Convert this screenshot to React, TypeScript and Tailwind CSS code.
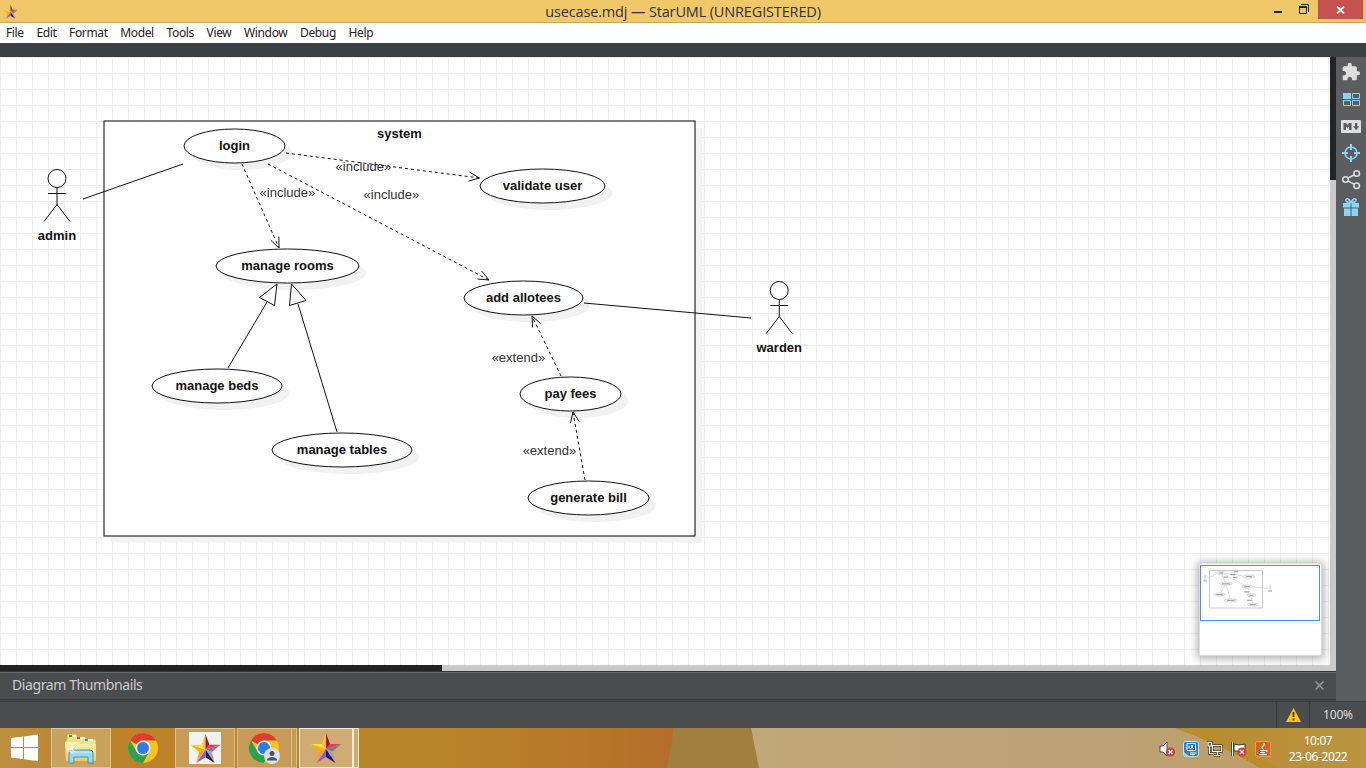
import React from "react";
import { MdExtension } from "react-icons/md";

const ink = "#111111";

type Oval = { x: number; y: number; w: number; label: string };

const ovals: Oval[] = [
  { x: 184, y: 72, w: 101, label: "login" },
  { x: 480, y: 112, w: 125, label: "validate user" },
  { x: 216, y: 192, w: 143, label: "manage rooms" },
  { x: 464, y: 224, w: 119, label: "add allotees" },
  { x: 152, y: 312, w: 130, label: "manage beds" },
  { x: 272, y: 376, w: 140, label: "manage tables" },
  { x: 520, y: 320, w: 101, label: "pay fees" },
  { x: 528, y: 424, w: 121, label: "generate bill" },
];

function UseCase({ x, y, w, label }: Oval) {
  const cx = x + w / 2;
  return (
    <g>
      <ellipse cx={cx + 7} cy={y + 24} rx={w / 2} ry={17} fill="#f1f1f1" />
      <ellipse cx={cx} cy={y + 17} rx={w / 2} ry={17} fill="#fff" stroke={ink} />
      <text x={cx} y={y + 21} textAnchor="middle" fontWeight="bold" fill={ink}>{label}</text>
    </g>
  );
}

function Actor({ x, y, label }: { x: number; y: number; label: string }) {
  return (
    <g fill="none" stroke={ink}>
      <circle cx={x} cy={y} r={9} fill="#fff" />
      <path d={`M${x} ${y + 9}v17.5M${x - 9} ${y + 15}h18M${x} ${y + 26}l-13 17M${x} ${y + 26}l13 17`} />
      <text x={x} y={y + 61} textAnchor="middle" fontWeight="bold" fill={ink} stroke="none">{label}</text>
    </g>
  );
}

function Dependency({ x1, y1, x2, y2 }: { x1: number; y1: number; x2: number; y2: number }) {
  const a = Math.atan2(y1 - y2, x1 - x2);
  const p = (d: number) => `${x2 + 11.5 * Math.cos(a + d)} ${y2 + 11.5 * Math.sin(a + d)}`;
  return (
    <g fill="none" stroke={ink}>
      <path d={`M${x1} ${y1}L${x2} ${y2}`} strokeDasharray="3 3" />
      <path d={`M${p(0.4)}L${x2} ${y2}L${p(-0.4)}`} />
    </g>
  );
}

function Diagram() {
  return (
    <svg width="1330" height="608" className="block" fontFamily="'Liberation Sans', Arial, sans-serif" fontSize="13">
      <defs>
        <pattern id="grid" width="16" height="16" patternUnits="userSpaceOnUse">
          <path d="M0 .5H16M.5 0V16" stroke="#eeeeee" />
        </pattern>
      </defs>
      <rect width="1330" height="608" fill="#fff" />
      <rect width="1330" height="608" fill="url(#grid)" />
      <rect x="111" y="71" width="591" height="415" fill="#f1f1f1" fillOpacity=".85" />
      <rect x="104" y="64" width="591" height="415" fill="#fff" stroke="#000" />
      <text x="399.5" y="81" textAnchor="middle" fontWeight="bold" fill={ink}>system</text>
      {ovals.map((o) => <UseCase key={o.label} {...o} />)}
      <Actor x={57} y={121.5} label="admin" />
      <Actor x={779.25} y={233.5} label="warden" />
      <path d="M83 142L183 107M584 246L751 261" stroke={ink} fill="none" />
      <Dependency x1={286} y1={96} x2={479.500} y2={121} />
      <Dependency x1={242} y1={107} x2={279} y2={191} />
      <Dependency x1={268} y1={107} x2={489} y2={223} />
      <Dependency x1={561} y1={319} x2={532} y2={259} />
      <Dependency x1={585} y1={423} x2={573} y2={355} />
      <g stroke={ink} fill="#fff">
        <path d="M228 311L267 245M337 375L298 247" />
        <path d="M277 227L259.5 240.5L274.5 248.5Z" />
        <path d="M291.5 227L289.5 248.5L306 243.5Z" />
      </g>
      <g fill="#333" textAnchor="middle">
        <text x="363.4" y="114">«include»</text>
        <text x="287.4" y="140">«include»</text>
        <text x="391.4" y="142">«include»</text>
        <text x="518.4" y="305">«extend»</text>
        <text x="549.4" y="398">«extend»</text>
      </g>
    </svg>
  );
}

function StarLogo({ size }: { size: number }) {
  return (
    <svg width={size} height={size} viewBox="0 0 32 32">
      <path d="M16 17V1L12 12Z" fill="#ffc91a" />
      <path d="M16 17V1L20 12Z" fill="#a8123c" />
      <path d="M16 17L20 12L31.5 12Z" fill="#ef3560" />
      <path d="M16 17L31.5 12L22.5 19.5Z" fill="#808080" />
      <path d="M16 17L22.5 19.5L25.5 31Z" fill="#a5a5a5" />
      <path d="M16 17L25.5 31L16 25Z" fill="#270a6b" />
      <path d="M16 17V25L6.5 31Z" fill="#8d57ec" />
      <path d="M16 17L6.5 31L9.5 19.5Z" fill="#f2a50c" />
      <path d="M16 17L9.5 19.5L.5 12Z" fill="#f7b100" />
      <path d="M16 17L.5 12L12 12Z" fill="#ffe040" />
    </svg>
  );
}

function Chrome({ user = false }: { user?: boolean }) {
  return (
    <svg width="32" height="32" viewBox="0 0 32 32">
      <circle cx="16" cy="16" r="15" fill="#fcc31e" />
      <path d="M16 16L3 8.5A15 15 0 0 1 29 8.5H16Z" fill="#e33b2e" />
      <path d="M3 8.5A15 15 0 0 0 16 31L22.5 19.5L9.5 19.5Z" fill="#2ba24c" />
      <circle cx="16" cy="16" r="7.5" fill="#fff" />
      <circle cx="16" cy="16" r="6" fill="#2d7be9" />
      {user && (
        <g>
          <circle cx="24" cy="24" r="8" fill="#dde1e7" />
          <circle cx="24" cy="21.5" r="2.5" fill="#4a5568" />
          <path d="M19 28.5V27Q24 23 29 27V28.5Z" fill="#4a5568" />
        </g>
      )}
    </svg>
  );
}

function Explorer() {
  return (
    <svg width="34" height="32" viewBox="0 0 34 32">
      <defs>
        <linearGradient id="folder" x2="0" y2="1"><stop stopColor="#fff3b3" /><stop offset="1" stopColor="#e6cc6a" /></linearGradient>
      </defs>
      <path d="M3 8V3Q3 2 4 2H12L14 5H21L23 7H31L32 9V28H2V8Z" fill="#f4df83" stroke="#c6a447" strokeWidth=".7" />
      <path d="M5 3H12V5H5Z" fill="#fff" /><path d="M5 3h3v2h-3Z" fill="#12b33c" />
      <path d="M13 5H21V7H13Z" fill="#fff" /><path d="M13 5h3v2h-3Z" fill="#d84b2d" />
      <path d="M21 7H29V9H21Z" fill="#fff" /><path d="M21 7h3v2h-3Z" fill="#2498e5" />
      <path d="M1 10H14L16 12H32V29H2Z" fill="url(#folder)" />
      <path d="M5 31V21Q5 18 8 18H26Q29 18 29 21V31H24V25H10V31Z" fill="#9ad8ef" stroke="#3e91b5" />
      <path d="M6 20H28" stroke="#d3f0fa" />
      <path d="M8 12V22M3 17H13M5 14L11 20M11 14L5 20" stroke="#fff" strokeWidth=".7" />
    </svg>
  );
}

function ToolRail() {
  return (
    <aside className="flex w-[30px] flex-col items-center gap-[5px] bg-[#5c5d5f] pt-1">
      <div className="flex h-[22px] w-5 items-center justify-center text-[#dedede]"><MdExtension size={20} /></div>
      <svg width="20" height="22" viewBox="0 0 20 22" fill="none" stroke="#8bd3f7">
        <path d="M2 5H10V11H2Z" fill="#8bd3f7" stroke="none" />
        <path d="M11.5 5.5H18.5V10.5H11.5ZM2.5 12.5H9.5V17.5H2.5ZM11.5 12.5H18.5V17.5H11.5Z" />
      </svg>
      <svg width="20" height="22" viewBox="0 0 20 22">
        <rect y="5" width="20" height="13" rx="1" fill="#dedede" />
        <path d="M2.500 15V8H5L6.500 10L8 8H10.500V15H8V11.500L6.500 13L5 11.500V15ZM14 8H16.200V11.200H18.300L15.100 15.200L12 11.200H14Z" fill="#5c5d5f" />
      </svg>
      <svg width="20" height="22" viewBox="0 0 20 22" fill="none" stroke="#8bd3f7">
        <circle cx="10" cy="11" r="6" strokeWidth="1.6" /><path d="M10 2V8M10 14V20M1 11H7M13 11H19" strokeWidth="2" />
      </svg>
      <svg width="20" height="22" viewBox="0 0 20 22" fill="none" stroke="#dedede" strokeWidth="1.5">
        <circle cx="4.5" cy="10.5" r="2.8" /><circle cx="15.7" cy="4.5" r="2.8" /><circle cx="15.7" cy="16.7" r="2.8" /><path d="M7 9L13 6M7 12L13 15.2" />
      </svg>
      <svg width="20" height="22" viewBox="0 0 20 22">
        <path d="M2 7H9.5V11.5H2ZM10.5 7H18V11.5H10.5ZM3 12.5H9.5V20H3ZM10.5 12.5H17V20H10.5Z" fill="#8bd3f7" />
        <path d="M10 6.5Q4 6.5 5 3.5Q7 1 10 6.5Q13 1 15 3.5Q16 6.5 10 6.5" fill="none" stroke="#8bd3f7" strokeWidth="1.5" />
      </svg>
    </aside>
  );
}

function Thumbnail() {
  return (
    <div className="absolute left-[1199px] top-[506px] h-[93px] w-[123px] border border-[#ddd] bg-white shadow-[0_1px_8px_2px_rgba(0,0,0,0.3)]">
      <svg width="121" height="91">
        <rect x=".5" y="1.5" width="119" height="55" fill="#fff" stroke="#4c8cf5" />
        <rect x="9.5" y="6.5" width="53" height="37.5" fill="#fff" stroke="#ccc" />
        <g transform="translate(0 .9) scale(.09)">
          <path d="M83 142L183 107M242 107L279 191M268 107L489 223M286 96L479 121M228 311L277 227M337 375L292 227M561 319L532 259M585 423L573 355M584 246L751 261" fill="none" stroke="#ccc" strokeWidth="7" />
          {ovals.map((o) => (
            <g key={o.label}>
              <ellipse cx={o.x + o.w / 2} cy={o.y + 17} rx={o.w / 2} ry="17" fill="#f4f4f4" stroke="#bbb" strokeWidth="6" />
              <path d={`M${o.x + 28} ${o.y + 18}h${o.w - 56}`} stroke="#777" strokeWidth="8" />
            </g>
          ))}
          <path d="M377 76H423M337 109H389M261 135H313M365 137H417M493 300H543M524 393H574M40 178H74M758 290H800" stroke="#666" strokeWidth="8" />
          <circle cx="57" cy="121" r="9" fill="none" stroke="#ccc" strokeWidth="7" />
          <circle cx="779" cy="233" r="9" fill="none" stroke="#ccc" strokeWidth="7" />
          <path d="M57 130V150L44 164M57 150L70 164M779 242V262L766 276M779 262L792 276" fill="none" stroke="#bbb" strokeWidth="7" />
        </g>
      </svg>
    </div>
  );
}

function Taskbar() {
  return (
    <footer className="relative flex h-10 bg-[#b87b25]">
      <svg className="absolute inset-0" width="1366" height="40" preserveAspectRatio="none">
        <defs>
          <linearGradient id="wood" gradientUnits="userSpaceOnUse" x1="0" x2="680" y1="0" y2="0">
            <stop stopColor="#bd9040" /><stop offset=".08" stopColor="#b98834" /><stop offset=".18" stopColor="#bb8229" />
            <stop offset=".65" stopColor="#b98429" /><stop offset=".85" stopColor="#b67829" /><stop offset="1" stopColor="#b56c29" />
          </linearGradient>
          <linearGradient id="sand"><stop stopColor="#c1a878" /><stop offset=".7" stopColor="#bca276" /><stop offset="1" stopColor="#bd9e64" /></linearGradient>
          <linearGradient id="gold"><stop stopColor="#b78b2d" /><stop offset="1" stopColor="#ba9440" /></linearGradient>
        </defs>
        <path d="M0 0H680V40H0Z" fill="url(#wood)" />
        <path d="M674 0H755L762 40H667Z" fill="#a17f3c" />
        <path d="M751 0H1190L1270 40H759Z" fill="url(#sand)" />
        <path d="M1175 0H1366V40H1260Q1225 18 1175 0Z" fill="url(#gold)" />
        <path d="M1175 0H1193Q1238 17 1280 40H1260Q1225 18 1175 0Z" fill="#b98c2c" />
      </svg>
      <div className="relative flex w-full">
        <button className="grid w-[51px] place-items-center pr-px">
          <svg width="28" height="28" viewBox="0 0 28 28" fill="#fff"><path d="M0 4L12 2.5V13H0ZM13 2.4L27 .5V13H13ZM0 14H12V25L0 23.5ZM13 14H27V27L13 25.2Z" /></svg>
        </button>
        <button className="grid h-10 w-[60px] place-items-center border border-[#dcc595] bg-[#c9a25e]"><Explorer /></button>
        <button className="grid w-16 place-items-center"><Chrome /></button>
        <button className="grid h-10 w-[60px] place-items-center border border-[#dcc08c] bg-[#c79b55]">
          <span className="grid size-8 place-items-center bg-[#f2f2f2] shadow-[inset_0_0_3px_#fff]"><StarLogo size={31} /></span>
        </button>
        <button className="ml-[2px] flex h-10 w-[60px] border border-[#dcc08c] bg-[#c79b55]">
          <span className="flex h-full w-[54px] items-center justify-center border-r border-[#dcc08c] pr-px"><Chrome user /></span>
        </button>
        <button className="ml-[2px] flex h-10 w-[60px] border border-[#f9eedc] bg-[#d0ab72]">
          <span className="flex h-full w-[54px] items-center justify-center border-r-2 border-[#f9eedc]"><StarLogo size={32} /></span>
        </button>
        <div className="ml-auto mr-[18px] flex items-center">
          <div className="mr-[17px] flex gap-2 pt-[2px]">
            <svg width="16" height="16" viewBox="0 0 16 16"><path d="M1 5H4L8 1V15L4 11H1Z" fill="#fff" stroke="#444" /><circle cx="11.5" cy="11" r="4.5" fill="#d83a35" /><path d="M9.5 9L13.5 13M13.5 9L9.5 13" stroke="#fff" strokeWidth="1.5" /></svg>
            <svg width="16" height="16" viewBox="0 0 16 16"><rect x=".5" y=".5" width="15" height="15" rx="2" fill="#1b87d6" stroke="#bfe3f7" /><path d="M4 2.5H12.5V9.5H4Z" fill="#2c6fb5" stroke="#fff" /><path d="M6 4.5V7.5M10 4L7.5 8M8 4L10.5 8M7 12H13.5M7 13.5H12" stroke="#fff" /><path d="M1 11L6 15H1Z" fill="#f2c14d" /></svg>
            <svg width="16" height="16" viewBox="0 0 16 16" fill="none"><path d="M5.5 4.5H14.5V10.5H5.5ZM7 14.5H13M10.5 11V14M2.5 5V12.5H6M1 1.5H4.5V5H1Z" stroke="#443b2b" strokeWidth="2.6" /><path d="M5.5 4.5H14.5V10.5H5.5ZM7 14.5H13M10.5 11V14M2.5 5V12.5H6M1 1.5H4.5V5H1Z" stroke="#fff" strokeWidth="1.2" /></svg>
            <svg width="16" height="16" viewBox="0 0 16 16"><path d="M1.5 1V15" stroke="#333" strokeWidth="2.5" /><path d="M3 3L8 4L14 3V10H3Z" fill="#fff" stroke="#333" /><path d="M1.5 1V15" stroke="#fff" /><circle cx="11" cy="11" r="4.5" fill="#d83a35" /><path d="M9 9L13 13M13 9L9 13" stroke="#fff" strokeWidth="1.5" /></svg>
            <svg width="16" height="16" viewBox="0 0 16 16"><rect x=".5" y=".5" width="15" height="15" rx="1" fill="#dd6118" stroke="#f09a5c" /><path d="M9 2Q10 4 8 5Q6 6.5 8 8M5 9.5H10.5Q13 8.5 11.5 11M5 11.5H10M4 13.5H12" fill="none" stroke="#fff" strokeWidth="1.1" /></svg>
          </div>
          <div className="flex w-[60px] flex-col items-center whitespace-nowrap pt-px text-[12px] leading-4 tracking-[-0.4px] text-white"><span>10:07</span><span>23-06-2022</span></div>
        </div>
      </div>
    </footer>
  );
}

const menus = ["File", "Edit", "Format", "Model", "Tools", "View", "Window", "Debug", "Help"];

export default function App() {
  return (
    <main className="flex h-[768px] w-[1366px] flex-col overflow-hidden bg-[#4b4c4e] font-['Noto_Sans','Open_Sans',sans-serif]">
      <header className="grid h-[23px] grid-cols-[1fr_auto_1fr] border-b border-[#c9a75a] bg-[#f0c869]">
        <div className="pl-[3px] pt-1"><StarLogo size={15} /></div>
        <h1 className="w-[281px] whitespace-nowrap text-center font-['Open_Sans','Noto_Sans',sans-serif] text-[14.5px] leading-[23px] tracking-[-0.15px] text-[#333]">usecase.mdj — StarUML (UNREGISTERED)</h1>
        <div className="flex justify-end pr-[3px]">
          <svg width="44" height="22"><path d="M0 11H8V13H0Z" fill="#222" /><path d="M25.5 6.5H32.5V13.5H25.5ZM27 4.5H34.5V12" fill="none" stroke="#222" /><path d="M25 6H33V8H25Z" fill="#222" /></svg>
          <button className="grid h-[19px] w-[45px] place-items-center bg-[#c75050]"><svg width="9" height="8"><path d="M1 .5L8 7.5M8 .5L1 7.5" stroke="#fff" strokeWidth="1.8" /></svg></button>
        </div>
      </header>
      <nav className="flex h-5 items-center gap-[12.7px] bg-white pl-[6px] text-[12px] leading-5 tracking-[-0.37px] text-[#222]">
        {menus.map((s) => <span key={s}>{s}</span>)}
      </nav>
      <div className="h-[14px] shrink-0 bg-[#3b4042]" />
      <div className="flex h-[644px] shrink-0">
        <div className="w-[1336px]">
          <div className="flex h-[608px]">
            <div className="relative w-[1330px]"><Diagram /><Thumbnail /></div>
            <div className="w-[6px] bg-[#cacaca]"><div className="h-[123px] bg-[#222324]" /></div>
          </div>
          <div className="h-[6px] bg-[#cacaca]"><div className="h-full w-[442px] bg-[#222324]" /></div>
          <div className="flex h-[29px] items-center justify-between border-y border-[#343638] px-3 text-[14px] leading-[26px] tracking-[-0.4px] text-[#cccccc] shadow-[inset_0_1px_#696a6c]">
            <span className="pb-px">Diagram Thumbnails</span>
            <svg width="9" height="9"><path d="M.5 .5L8.5 8.5M8.5 .5L.5 8.5" stroke="#999" strokeWidth="1.5" /></svg>
          </div>
        </div>
        <ToolRail />
      </div>
      <div className="flex h-[27px] shrink-0 justify-end border-t border-[#38393b] text-[12px] tracking-[-0.2px] text-[#ddd]">
        <div className="grid w-[34px] place-items-center border-x border-[#38393b]"><svg width="15" height="14"><path d="M7.5 0L15 14H0Z" fill="#ffc40c" /><path d="M7.5 4V9M7.5 10.5V12.5" stroke="#333" strokeWidth="1.7" /></svg></div>
        <div className="grid w-[56px] place-items-center">100%</div>
      </div>
      <Taskbar />
    </main>
  );
}
